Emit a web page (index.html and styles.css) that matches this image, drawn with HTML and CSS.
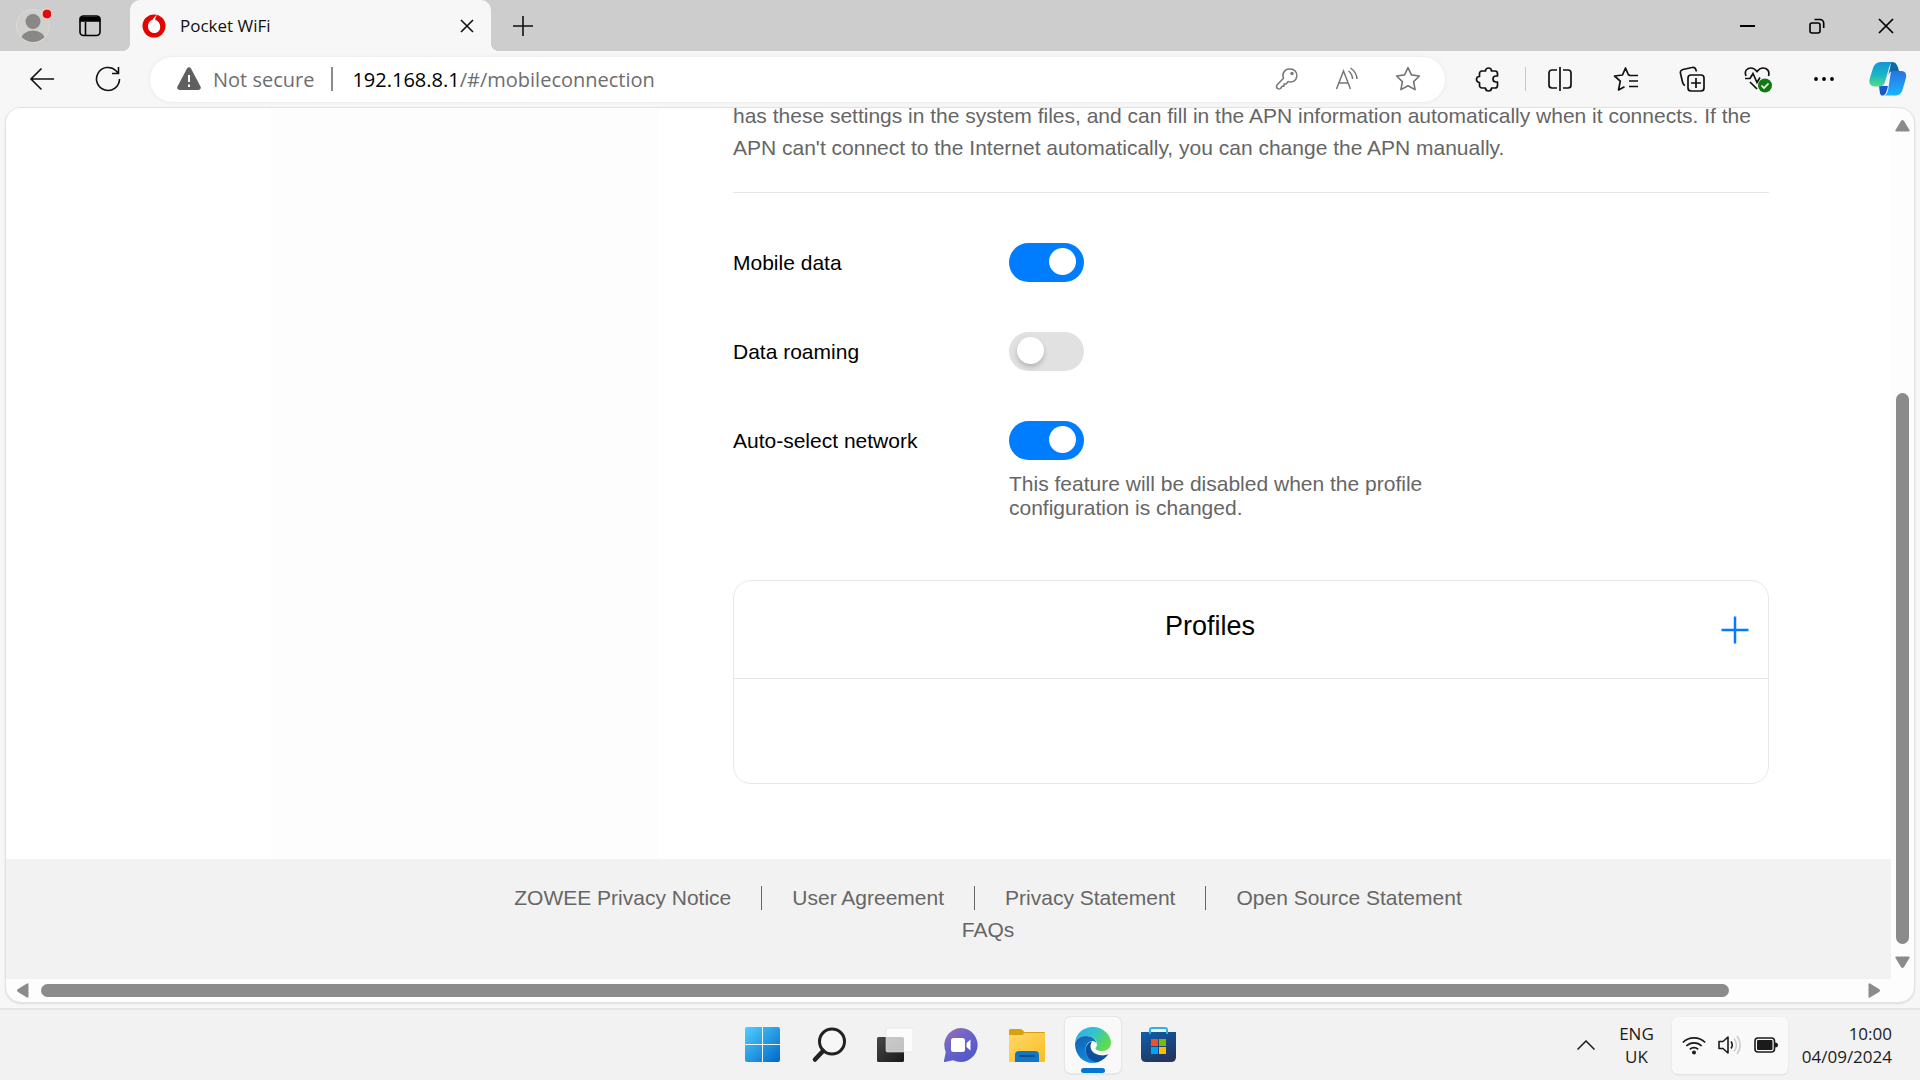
FILE: index.html
```html
<!DOCTYPE html>
<html lang="en">
<head>
<meta charset="utf-8">
<title>Pocket WiFi</title>
<link rel="stylesheet" href="styles.css">
</head>
<body>
<div class="desktop">
  <header class="tabstrip">
    <button class="avatar" aria-label="Profile"><svg width="36" height="36" viewBox="0 0 36 36"><defs><clipPath id="av"><circle cx="18" cy="19" r="16"/></clipPath></defs><circle cx="18" cy="19" r="16.500" fill="#d2d0cc" stroke="#dcdad7"/><circle cx="18" cy="14.500" r="7.500" fill="#8a8886"/><ellipse cx="18" cy="33" rx="12" ry="9.500" fill="#8a8886" clip-path="url(#av)"/><circle cx="32" cy="7" r="5" fill="#e00b0b" stroke="#f2e4e4"/></svg></button>
    <button class="tabactions" aria-label="Tab actions"><svg width="24" height="24" viewBox="0 0 24 24" fill="none" stroke="#000" stroke-width="1.6"><rect x="2" y="2" width="20" height="19.500" rx="3.500"/><path d="M2.500 3.500h19v3.500H2.500z" fill="#000"/><path d="M7.500 8v13"/></svg></button>
    <div class="tab">
      <svg width="24" height="24" viewBox="0 0 24 24"><circle cx="12" cy="12" r="11.500" fill="#e60000"/><path d="M15.500 1C13 2 11.500 3.500 11 5.500 7.500 6.500 5.800 9.500 6 13c.3 3.600 3 6 6.300 6 3.600 0 6-2.600 5.900-6.300-.1-3.800-2.200-6-4.900-6.800C13.200 4 14 2.200 15.500 1z" fill="#fff"/></svg>
      <span class="tab-title">Pocket WiFi</span>
      <button aria-label="Close tab"><svg width="14" height="14" viewBox="0 0 14 14" stroke="#111" stroke-width="1.6"><path d="M1 1l12 12M13 1L1 13"/></svg></button>
    </div>
    <button class="newtab" aria-label="New tab"><svg width="22" height="22" viewBox="0 0 22 22" stroke="#111" stroke-width="1.6"><path d="M11 1v20M1 11h20"/></svg></button>
    <div class="winbtns">
      <button aria-label="Minimize"><svg width="16" height="16" viewBox="0 0 16 16"><path d="M0 7h15v2H0z"/></svg></button>
      <button aria-label="Restore"><svg width="16" height="16" viewBox="0 0 16 16" fill="none" stroke="#000" stroke-width="1.6"><rect x="1" y="5" width="10" height="10" rx="2"/><path d="M5.500 1.500H11a3.700 3.700 0 0 1 3.700 3.700V10"/></svg></button>
      <button aria-label="Close"><svg width="16" height="16" viewBox="0 0 16 16" stroke="#000" stroke-width="1.7"><path d="M1 1l14 14M15 1L1 15"/></svg></button>
    </div>
  </header>
  <nav class="toolbar">
    <button class="nav-btn" aria-label="Back"><svg width="26" height="24" viewBox="0 0 26 24" fill="none" stroke="#111" stroke-width="1.6"><path d="M25 12H2M12.500 1.500L2 12l10.500 10.500"/></svg></button>
    <button class="nav-btn" aria-label="Refresh"><svg width="26" height="26" viewBox="0 0 26 26" fill="none" stroke="#111" stroke-width="1.6"><path d="M24.500 13A11.500 11.500 0 1 1 21 4.700L23 7M23.500 1v6.500H17"/></svg></button>
    <div class="address">
      <svg width="26" height="24" viewBox="0 0 26 24"><path d="M11 1.500a2.300 2.300 0 0 1 4 0L24.500 19.500a2.300 2.300 0 0 1-2 3.500h-19a2.300 2.300 0 0 1-2-3.500z" fill="#606060"/><path d="M13 8v7M13 17.500v2.500" stroke="#fff" stroke-width="2"/></svg>
      <span class="secure">Not secure</span><span class="bar"></span>
      <span class="url"><b>192.168.8.1</b>/#/mobileconnection</span>
      <div class="address-icons">
        <button aria-label="Passwords"><svg width="24" height="24" viewBox="0 0 24 24" fill="none" stroke="#757575" stroke-width="1.500"><path d="M15 2a6.500 6.500 0 1 1-1.800 12.600L11 17H9v2.300H7L5.500 21.500Q4 22.500 2.500 21.500T2 18l6.500-6.800A6.500 6.500 0 0 1 15 2z" stroke-linejoin="round"/><circle cx="17" cy="6.500" r="1"/></svg></button>
        <button aria-label="Read aloud"><svg width="24" height="24" viewBox="0 0 24 24" fill="none" stroke="#757575" stroke-width="1.500"><path d="M1.500 22L8.500 4l7 18M4 16h9M13.500 4q4 3 4 8M15.500 1q6 4 6.500 11"/></svg></button>
        <button aria-label="Add to favorites"><svg width="26" height="26" viewBox="0 0 24 24" fill="none" stroke="#757575" stroke-width="1.500" stroke-linejoin="round"><path d="M12 1.500l3.200 6.700 7.300 1-5.300 5.200 1.300 7.400L12 18.300l-6.500 3.500 1.300-7.400L1.500 9.200l7.300-1z"/></svg></button>
      </div>
    </div>
    <div class="tools">
      <button class="ext" aria-label="Extensions"><svg width="26" height="26" viewBox="0 0 26 26" fill="none" stroke="#111" stroke-width="1.7" stroke-linejoin="round"><path d="M7 5h3.500a3 3 0 1 1 6 0H20a2.500 2.500 0 0 1 2.500 2.500V10H21a3 3 0 0 0 0 6h1.500v3.500A2.500 2.500 0 0 1 20 22h-3.500a3 3 0 0 1-6 0H7a2.500 2.500 0 0 1-2.500-2.500V16.500a3 3 0 0 1 0-6v-3A2.500 2.500 0 0 1 7 5z"/></svg></button>
      <span class="tool-sep"></span>
      <button aria-label="Split screen"><svg width="26" height="26" viewBox="0 0 26 26" fill="none" stroke="#111" stroke-width="1.700"><path d="M10 4H5a3 3 0 0 0-3 3v12a3 3 0 0 0 3 3h5M16 4h5a3 3 0 0 1 3 3v12a3 3 0 0 1-3 3h-5M13 1v24"/></svg></button>
      <button aria-label="Favorites"><svg width="26" height="26" viewBox="0 0 26 26" fill="none" stroke="#111" stroke-width="1.700" stroke-linejoin="round"><path d="M17 9h-1.500L12.500 2 9.500 9l-8 1 5.800 5.200L5.500 24l6-3.200M16 9.500H25M16 15h9M16 20.500h9"/></svg></button>
      <button aria-label="Collections"><svg width="26" height="26" viewBox="0 0 26 26" fill="none" stroke="#111" stroke-width="1.700"><rect x="9" y="9" width="16" height="16" rx="3"/><path d="M17 12v10M12 17h10M6 19.500C4.500 19 4 18 3.500 16L1.500 7.500C1 5.500 2 4 4 3.500l9-2c2-.5 3.500.5 4 2.500l.5 1.500"/></svg></button>
      <button aria-label="Browser essentials"><svg width="28" height="28" viewBox="0 0 28 28" fill="none" stroke="#111" stroke-width="1.700"><path d="M2 11C0 6 3 3 7 3c3 0 4.500 1.500 6 3.500C14.500 4.500 16 3 19 3c4 0 7 3 5.500 8M1 13.500h5l3-5 4 9 3-5M6 17l7 7"/><circle cx="21" cy="20.500" r="7" fill="#107c10" stroke="none"/><path d="M17.500 20.500l2.500 2.500 4.500-4.500" stroke="#fff"/></svg></button>
      <button aria-label="Settings and more"><svg width="24" height="24" viewBox="0 0 24 24"><circle cx="4" cy="12" r="1.900"/><circle cx="12" cy="12" r="1.900"/><circle cx="20" cy="12" r="1.900"/></svg></button>
      <button class="copilot" aria-label="Copilot"><svg width="38" height="34" viewBox="0 0 38 34"><defs><linearGradient id="c1" x1="0" y1="0" x2="0" y2="1"><stop offset="0" stop-color="#1594d8"/><stop offset=".5" stop-color="#19b4c6"/><stop offset="1" stop-color="#4fdc8a"/></linearGradient><linearGradient id="c2" x1="0" y1="0" x2="0" y2="1"><stop offset="0" stop-color="#2a72e0"/><stop offset="1" stop-color="#18b5ff"/></linearGradient></defs><path d="M22 9h10c4.500 0 6 3 4.800 7.500l-3 10.500c-1.300 4.500-3.800 6.500-7.800 6.500H14c3 0 4-2 5-5z" fill="url(#c2)"/><path d="M10 24h9l-1 4c-1 3-2 5.500-4.500 5.500S11 31 10.500 28z" fill="#1755d2"/><path d="M12 0h13c-3 0-4 3-5 6l-4 14c-1 3-3 4.500-5 4.500H6c-5 0-6.500-3.500-5.200-8L4 6c1.300-4 4-6 8-6z" fill="url(#c1)"/><path d="M23 0c4 0 5 3 6 5.500L30 9h-6c-3 0-4 2-5 5l2-8c.7-3 1-6 2-6z" fill="#0b6aa8"/></svg></button>
    </div>
  </nav>
  <div class="frame">
    <div class="viewport">
      <div class="page">
        <div class="body">
          <aside class="side"></aside>
          <main class="main">
            <p class="intro">has these settings in the system files, and can fill in the APN information automatically when it connects. If the APN can't connect to the Internet automatically, you can change the APN manually.</p>
            <div class="row"><label for="md">Mobile data</label><input id="md" type="checkbox" class="switch" checked></div>
            <div class="row"><label for="dr">Data roaming</label><input id="dr" type="checkbox" class="switch"></div>
            <div class="row"><label for="an">Auto-select network</label><input id="an" type="checkbox" class="switch" checked></div>
            <p class="note">This feature will be disabled when the profile configuration is changed.</p>
            <section class="card">
              <div class="card-head"><h2>Profiles</h2><button aria-label="Add profile"><svg width="28" height="28" viewBox="0 0 28 28" stroke="#007dff" stroke-width="2.500"><path d="M14 .5v27M.5 14h27"/></svg></button></div>
            </section>
          </main>
        </div>
        <footer class="footer">
          <div class="links"><a href="#">ZOWEE Privacy Notice</a><a href="#">User Agreement</a><a href="#">Privacy Statement</a><a href="#">Open Source Statement</a></div>
          <div class="links"><a href="#">FAQs</a></div>
        </footer>
      </div>
    </div>
    <div class="vbar"><svg width="15" height="12" viewBox="0 0 15 12"><path d="M6 1q1.500-2 3 0l5.500 9q.7 1.500-1 1.500h-12q-1.700 0-1-1.500z"/></svg><span class="vtrack"><i></i></span><svg width="15" height="12" viewBox="0 0 15 12"><path d="M6 11q1.500 2 3 0l5.500-9q.7-1.500-1-1.500h-12q-1.700 0-1 1.500z"/></svg></div>
    <div class="hbar"><svg width="12" height="15" viewBox="0 0 12 15"><path d="M1 6q-2 1.500 0 3l9 5.500q1.500.7 1.500-1v-12q0-1.700-1.500-1z"/></svg><span class="htrack"><i></i></span><svg width="12" height="15" viewBox="0 0 12 15"><path d="M11 6q2 1.500 0 3l-9 5.500q-1.500.7-1.500-1v-12q0-1.700 1.500-1z"/></svg></div>
  </div>
  <div class="taskbar">
    <div class="apps">
      <button aria-label="Start"><svg width="36" height="36" viewBox="0 0 36 36"><defs><linearGradient id="w" x1="0" y1="0" x2="1" y2="1"><stop offset="0" stop-color="#4fd0ff"/><stop offset="1" stop-color="#0067c8"/></linearGradient></defs><path d="M2 0h15v17H0V2q0-2 2-2zM18 0h15q2 0 2 2v15H18zM0 18h17v17H2q-2 0-2-2zM18 18h17v15q0 2-2 2H18z" fill="url(#w)"/></svg></button>
      <button aria-label="Search"><svg width="36" height="36" viewBox="0 0 36 36" fill="none" stroke="#222"><circle cx="21" cy="14.500" r="12.500" stroke-width="3" fill="#f7f7f7"/><path d="M12 24l-8 8.500" stroke-width="4.500" stroke-linecap="round"/></svg></button>
      <button aria-label="Task view"><svg width="36" height="36" viewBox="0 0 36 36"><defs><linearGradient id="t" x1="0" y1="0" x2="1" y2="1"><stop offset="0" stop-color="#484848"/><stop offset="1" stop-color="#181818"/></linearGradient></defs><rect x="0" y="10" width="27" height="25" rx="1.500" fill="url(#t)"/><rect x="9" y="1" width="27" height="24" rx="1.500" fill="#fff" fill-opacity=".72" stroke="#ddd" stroke-opacity=".6"/></svg></button>
      <button aria-label="Chat"><svg width="36" height="36" viewBox="0 0 36 36"><defs><linearGradient id="h" x1="0" y1="0" x2=".7" y2="1"><stop offset="0" stop-color="#9b6fb0"/><stop offset=".5" stop-color="#6a63c8"/><stop offset="1" stop-color="#5257c8"/></linearGradient></defs><path d="M18 1a17 17 0 1 1-8 32.200L2 35q-1.500 0-1-1.500L2.800 25A17 17 0 0 1 18 1z" fill="url(#h)"/><rect x="8" y="11" width="14" height="14" rx="2.500" fill="#fff"/><path d="M23.500 16l4-3.500v11l-4-3.500z" fill="#fff"/></svg></button>
      <button aria-label="File Explorer"><svg width="36" height="36" viewBox="0 0 36 36"><defs><linearGradient id="f" x1="0" y1="0" x2="1" y2="1"><stop offset="0" stop-color="#ffd868"/><stop offset="1" stop-color="#f9bd24"/></linearGradient></defs><path d="M0 3.500Q0 2 1.500 2H11q1.500 0 2.500 1l2 2H35q1 0 1 1v8H0z" fill="#d9a00e"/><path d="M0 8h12q1.500 0 2.500-1l1-1H36v28q0 1-1 1H1q-1 0-1-1z" fill="url(#f)"/><path d="M6 35v-7q0-4 4-4h16q4 0 4 4v7z" fill="#1176c4"/><path d="M11 29h14" stroke="#0a508f" stroke-width="2" stroke-linecap="round"/></svg></button>
      <button class="active" aria-label="Microsoft Edge"><svg width="36" height="36" viewBox="0 0 36 36"><defs><linearGradient id="e1" x1="0" y1="0" x2="1" y2=".5"><stop offset="0" stop-color="#35a8ec"/><stop offset=".5" stop-color="#2fc4cf"/><stop offset="1" stop-color="#5fdc4c"/></linearGradient><linearGradient id="e2" x1="0" y1="0" x2=".5" y2="1"><stop offset="0" stop-color="#115fae"/><stop offset="1" stop-color="#118be0"/></linearGradient></defs><path d="M0 17C0 7 8 0 18 0s18 8 18 15.500c0 5-4 8.500-9 8.500-4 0-6.500-1.500-6.500-2.500S22 20 22 17.500C22 12 17 9 11.500 9 5.500 9 1 12 0 17z" fill="url(#e1)"/><path d="M0 17c1-5 5.500-8 11-8 6 0 10.500 3.500 10.500 8-.5-2-2-3-4-3-4 0-7 4-7 9 0 6 5 11.500 12 12.300-1.500.5-3 .7-4.500.7C8 36 0 28 0 17z" fill="url(#e2)"/><path d="M17 14.200c-4 1.200-6.500 4.800-6.500 9.300C11 30 16 35.500 23 35.200c5-2 8.500-5 10.500-8.200-3 1.500-5.500 1.500-7.500 1.300-6-.5-10.500-4-10.500-9 0-2 .5-3.500 1.500-5.100z" fill="#0d50a0"/></svg></button>
      <button aria-label="Microsoft Store"><svg width="36" height="36" viewBox="0 0 36 36"><defs><linearGradient id="s" x1="0" y1="0" x2=".5" y2="1"><stop offset="0" stop-color="#0f5fae"/><stop offset="1" stop-color="#22365f"/></linearGradient></defs><path d="M0 5h35v25q0 5-5 5H5q-5 0-5-5z" fill="url(#s)"/><path d="M9 7V3q0-2 2-2h13q2 0 2 2v4" fill="none" stroke="#28b4ea" stroke-width="2"/><path d="M10 12h7v7h-7z" fill="#f25022"/><path d="M18 12h7v7h-7z" fill="#7fba00"/><path d="M10 20h7v7h-7z" fill="#00a4ef"/><path d="M18 20h7v7h-7z" fill="#ffb900"/></svg></button>
    </div>
    <div class="tray">
      <button aria-label="Show hidden icons"><svg width="18" height="10" viewBox="0 0 18 10" fill="none" stroke="#1b1b1b" stroke-width="1.500"><path d="M.5 9.500L9 1l8.500 8.500"/></svg></button>
      <div class="lang">ENG<br>UK</div>
      <div class="status">
        <svg width="24" height="20" viewBox="0 0 24 20" fill="none" stroke="#1b1b1b" stroke-width="1.700"><path d="M.8 7.500a16 16 0 0 1 22.400 0M4.300 11a11 11 0 0 1 15.400 0M7.800 14.300a6 6 0 0 1 8.400 0"/><circle cx="12" cy="17.500" r="2" fill="#1b1b1b" stroke="none"/></svg>
        <svg width="24" height="20" viewBox="0 0 24 20" fill="none" stroke="#1b1b1b" stroke-width="1.600"><path d="M1 6.500h4L10 2v16l-5-4.500H1z" stroke-linejoin="round"/><path d="M13 6.500q2.500 3.500 0 7"/><path d="M16 3.500q5 6.500 0 13M19 1q6.500 9 0 18" stroke="#ccc"/></svg>
        <svg width="24" height="20" viewBox="0 0 24 20"><rect x="1" y="3" width="19.500" height="14" rx="3" fill="none" stroke="#1b1b1b" stroke-width="1.600"/><rect x="3" y="5" width="15.500" height="10" rx="1" fill="#1b1b1b"/><path d="M21 7.500q3 0 3 2.500t-3 2.500z" fill="#1b1b1b"/></svg>
      </div>
      <div class="clock">10:00<br>04/09/2024</div>
    </div>
  </div>
</div>
</body>
</html>
```
FILE: styles.css
```css
* { box-sizing: border-box; }
body { margin: 0; font-family: "Liberation Sans", Arial, sans-serif; font-size: 21px; background: #f7f7f7; }
button { border: 0; padding: 0; background: none; display: flex; align-items: center; justify-content: center; flex: none; }
svg { flex: none; display: block; }
.desktop { display: flex; flex-direction: column; height: 100vh; overflow: hidden; }

.tabstrip { height: 51px; flex: none; background: #cdcdcd; display: flex; align-items: center; padding-left: 15px; font-family: "Open Sans", "Noto Sans", sans-serif; }
.avatar { width: 36px; margin-bottom: 2px; }
.tabactions { margin-left: 27px; width: 24px; }
.tab { margin-left: 28px; width: 361px; height: 51px; background: #f7f7f7; border-radius: 10px 10px 0 0; display: flex; align-items: center; padding: 0 17px 0 12px; position: relative; }
.tab::before, .tab::after { content: ""; position: absolute; bottom: 0; width: 8px; height: 8px; }
.tab::before { left: -8px; background: radial-gradient(circle at 0 0, #cdcdcd 8px, #f7f7f7 8px); }
.tab::after { right: -8px; background: radial-gradient(circle at 100% 0, #cdcdcd 8px, #f7f7f7 8px); }
.tab-title { flex: 1; margin-left: 14px; font-size: 17px; color: #111; }
.newtab { margin-left: 21px; }
.winbtns { margin-left: auto; display: flex; }
.winbtns button { width: 69px; height: 51px; }

.toolbar { height: 56px; flex: none; display: flex; align-items: center; padding: 0 13px 0 28px; font-family: "Open Sans", "Noto Sans", sans-serif; font-size: 20px; }
.nav-btn { width: 28px; margin-right: 38px; }
.nav-btn + .nav-btn { margin-right: 28px; }
.address { flex: 1; height: 45px; border-radius: 23px; background: #fff; box-shadow: 0 0 4px #e6e6e6; display: flex; align-items: center; padding: 0 24px 0 26px; color: #6e6e6e; }
.secure { margin-left: 11px; }
.bar { width: 2px; height: 24px; background: #8a8a8a; margin: 0 19px 0 17px; }
.url b { font-weight: 400; color: #000; }
.address-icons { margin-left: auto; display: flex; gap: 36px; }
.tools { display: flex; align-items: center; }
.tools button { width: 38px; margin-left: 28px; }
.tools .ext { margin-left: 24px; }
.tools .copilot { margin-left: 26px; }
.tool-sep { width: 1px; height: 24px; background: #c8c8c8; margin-left: 18px; }
.tools .tool-sep + button { margin-left: 15px; }

.frame { flex: 1; min-height: 0; margin: 0 5px 5px; border: 1px solid #e2e2e2; border-radius: 16px; background: #fdfdfd; overflow: hidden; display: grid; grid-template: 1fr 23px / 1fr 23px; box-shadow: 0 1px 2px #ddd; }
.viewport { overflow: hidden; background: #fff; display: flex; flex-direction: column; justify-content: flex-end; }
.page { width: calc(100% + 79px); }
.body { display: flex; padding: 0 201px 0 264px; }
.side { width: 389px; background: #fdfdfd; }
.main { flex: 1; padding: 0 0 75px 74px; }
.intro { margin: 0 0 50px; padding-bottom: 28px; line-height: 32px; color: #666; border-bottom: 1px solid #e6e6e6; }
.row { display: flex; align-items: center; margin-bottom: 50px; height: 39px; }
.row label { width: 276px; }
.switch { appearance: none; margin: 0; width: 75px; height: 39px; border-radius: 20px; background: #e1e1e2; padding: 5px 8px; display: flex; }
.switch::before { content: ""; width: 27px; height: 27px; border-radius: 50%; background: #fff; box-shadow: 0 3px 5px #0003; }
.switch:checked { background: #007dff; justify-content: flex-end; }
.switch:checked::before { box-shadow: none; }
.note { margin: -38px 0 60px 276px; width: 440px; line-height: 24px; color: #666; }
.card { height: 204px; border: 1px solid #e8e8e8; border-radius: 18px; }
.card-head { height: 98px; border-bottom: 1px solid #e8e8e8; display: flex; align-items: center; padding-right: 19px; }
.card-head h2 { flex: 1; margin: 0 0 7px; font-size: 27px; font-weight: 400; text-align: center; padding-right: 35px; }
.footer { height: 120px; background: #f2f2f2; padding-top: 23px; }
.links { display: flex; justify-content: center; height: 32px; align-items: center; }
.links a { color: #666; text-decoration: none; line-height: 24px; padding: 0 30px; }
.links a + a { border-left: 1px solid #666; }

.vbar, .hbar { display: flex; align-items: center; fill: #8b8b8b; }
.vbar { flex-direction: column; padding: 12px 0 11px; }
.vtrack { flex: 1; margin: 14px 0 12px; width: 13px; display: flex; align-items: flex-end; }
.vtrack i { width: 13px; height: 69%; border-radius: 7px; background: #8b8b8b; }
.hbar { padding: 0 11px; }
.htrack { flex: 1; height: 13px; margin: 0 12px; }
.htrack i { display: block; width: 93%; height: 13px; border-radius: 7px; background: #8b8b8b; }

.taskbar { height: 72px; flex: none; background: #f2f2f2; border-top: 2px solid #e5e5e5; padding-left: 2px; display: grid; grid-template-columns: 1fr auto 1fr; align-items: center; font-family: "Open Sans", "Noto Sans", sans-serif; font-size: 17px; color: #1b1b1b; }
.apps { grid-column: 2; display: flex; gap: 10px; }
.apps button { width: 56px; height: 56px; }
.apps .active { background: #f9f9f9; border-radius: 6px; box-shadow: 0 0 0 1px #e6e6e6, 0 1px 2px #ccc; position: relative; }
.active::after { content: ""; position: absolute; left: 16px; bottom: 0; width: 24px; height: 5px; border-radius: 3px; background: #0078d4; }
.tray { display: flex; align-items: center; justify-content: flex-end; padding-right: 28px; line-height: 23px; }
.lang { margin: 0 18px 0 24px; text-align: center; }
.status { width: 116px; height: 57px; background: #f9f9f9; border-radius: 6px; box-shadow: 0 1px 2px #ddd; display: flex; align-items: center; justify-content: center; gap: 12px; }
.clock { text-align: right; margin-left: 14px; }
```
